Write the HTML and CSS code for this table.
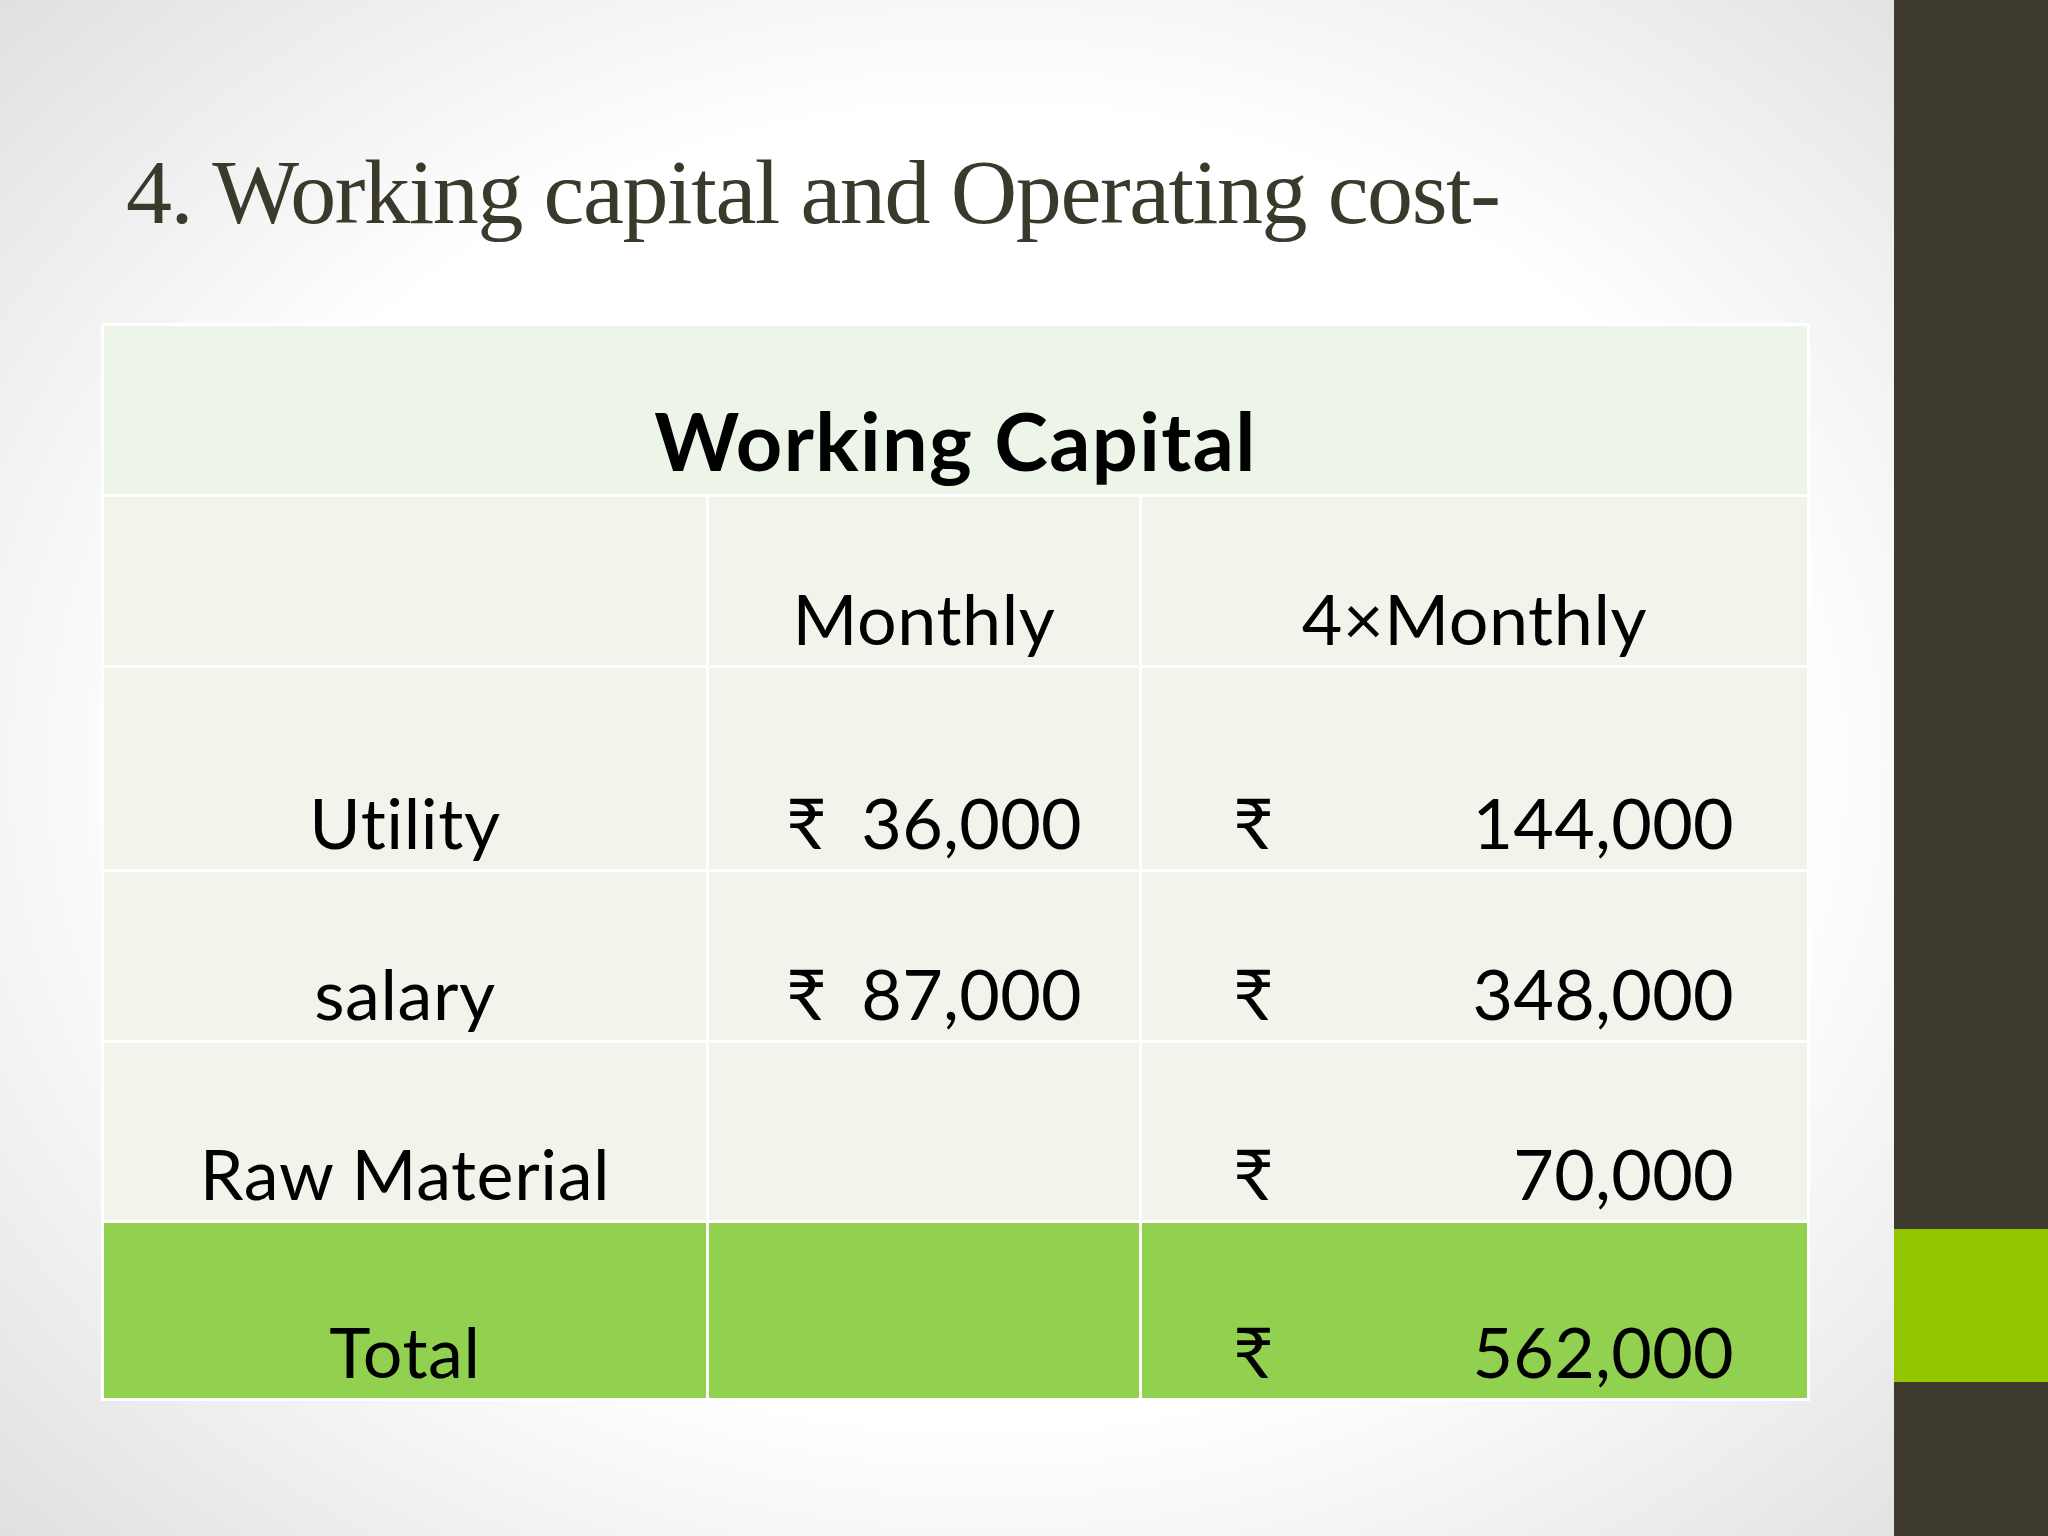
FILE: index.html
```html
<!DOCTYPE html>
<html lang="en">
<head>
<meta charset="utf-8">
<title>Working capital and Operating cost</title>
<link rel="stylesheet" href="styles.css">
</head>
<body>
<div class="slide">
  <main class="content">
    <h1 class="title">4. Working capital and Operating cost-</h1>
    <div class="wc-table">
      <div class="cell head">Working Capital</div>

      <div class="cell"></div>
      <div class="cell center">Monthly</div>
      <div class="cell center">4×Monthly</div>

      <div class="cell center">Utility</div>
      <div class="cell money m2"><span>₹</span><span>36,000</span></div>
      <div class="cell money m3"><span>₹</span><span>144,000</span></div>

      <div class="cell center">salary</div>
      <div class="cell money m2"><span>₹</span><span>87,000</span></div>
      <div class="cell money m3"><span>₹</span><span>348,000</span></div>

      <div class="cell center">Raw Material</div>
      <div class="cell"></div>
      <div class="cell money m3"><span>₹</span><span>70,000</span></div>

      <div class="cell center total">Total</div>
      <div class="cell total"></div>
      <div class="cell money m3 total"><span>₹</span><span>562,000</span></div>
    </div>
  </main>
  <aside class="sidebar">
    <div class="accent"></div>
  </aside>
</div>
</body>
</html>
```

FILE: styles.css
```css
html, body {
  margin: 0;
  padding: 0;
}

body {
  width: 2048px;
  height: 1536px;
  overflow: hidden;
}

.slide {
  display: flex;
  width: 2048px;
  height: 1536px;
}

.content {
  width: 1894px;
  height: 1536px;
  background: radial-gradient(ellipse 74% 74% at 52% 50%, #ffffff 58%, #dedede 100%);
  box-sizing: border-box;
  padding-top: 146px;
}

.title {
  margin: 0 0 0 126px;
  font-family: "Liberation Serif", "Times New Roman", serif;
  font-weight: normal;
  font-size: 92px;
  line-height: 92px;
  letter-spacing: -1.4px;
  color: #3a392b;
  white-space: nowrap;
}

.wc-table {
  margin: 85px 0 0 101px;
  display: grid;
  grid-template-columns: 602px 430px 665px;
  grid-template-rows: 168px 168px 201px 168px 177px 175px;
  gap: 3px;
  padding: 3px;
  width: max-content;
  background: #ffffff;
  font-family: Lato, "Noto Sans", "DejaVu Sans", sans-serif;
  font-size: 70px;
  line-height: 1.2;
  letter-spacing: 0.6px;
  font-variant-ligatures: none;
  color: #000;
}

.cell {
  background: #f0f4ea;
  display: flex;
  align-items: flex-end;
  box-sizing: border-box;
  padding-bottom: 5px;
  white-space: nowrap;
}

.head {
  grid-column: 1 / 4;
  background: #ecf5e7;
  justify-content: center;
  font-weight: bold;
  font-size: 81px;
  letter-spacing: 1.4px;
  padding-bottom: 6px;
}

.center {
  justify-content: center;
}

.money {
  justify-content: space-between;
  letter-spacing: 0.3px;
}

.m2 {
  padding-left: 77px;
  padding-right: 57px;
}

.m3 {
  padding-left: 91px;
  padding-right: 73px;
}

.total {
  background: #92d050;
}

.sidebar {
  width: 154px;
  height: 1536px;
  background: #3e3b2e;
  display: flex;
  flex-direction: column;
}

.accent {
  margin-top: 1229px;
  height: 153px;
  background: #94c600;
}
```
